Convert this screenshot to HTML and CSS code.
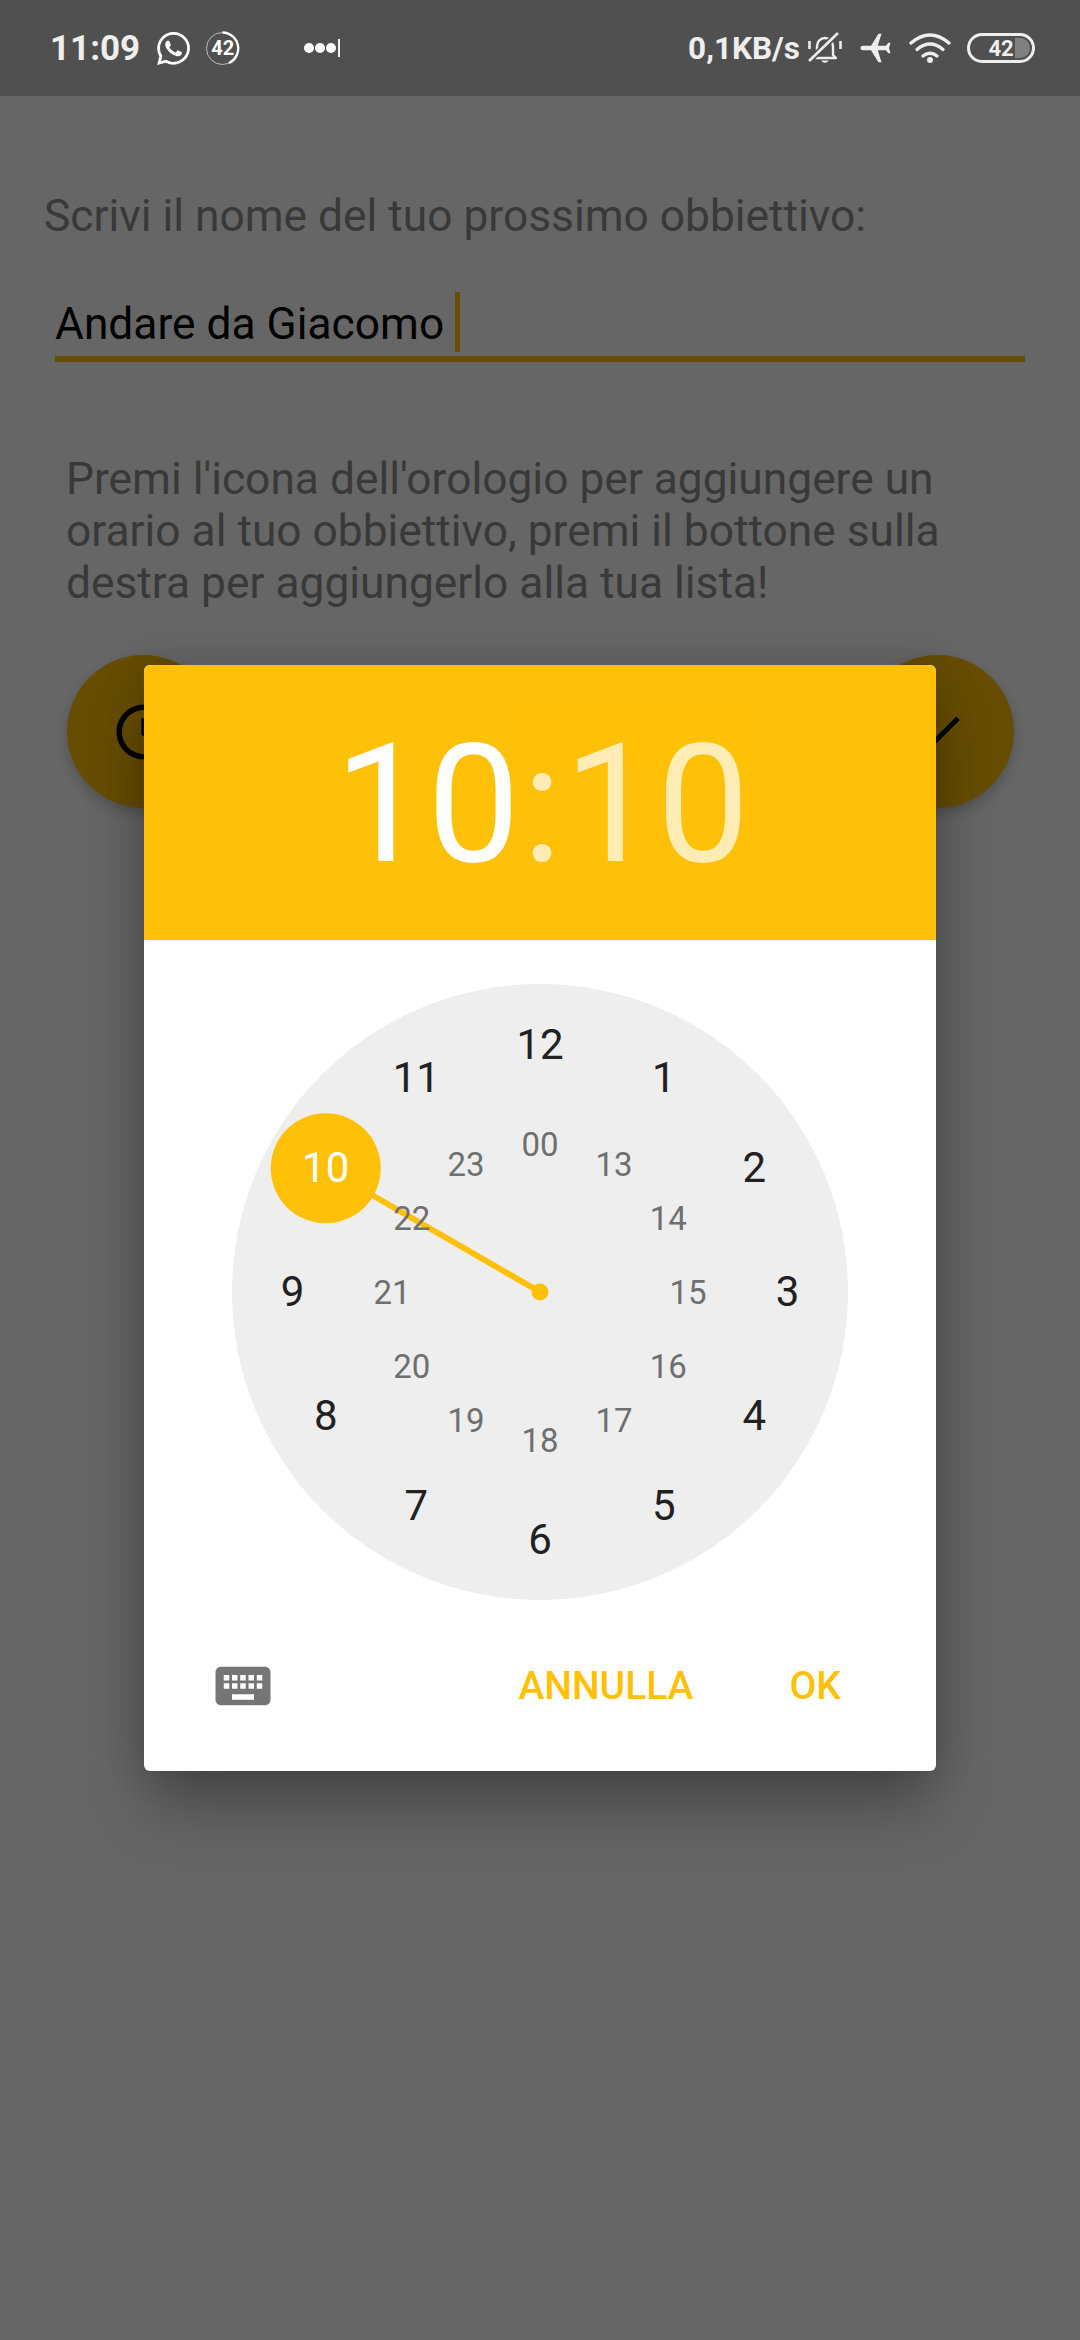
FILE: index.html
```html
<!DOCTYPE html>
<html lang="it">

<head>
  <meta charset="UTF-8" />
  <meta name="viewport" content="width=device-width, initial-scale=1" />
  <title>Nuovo obbiettivo</title>
  <link rel="stylesheet" href="styles.css">
</head>

<body>
  <div class="page">
    <div class="status-bar">
      <span class="status-time">11:09</span>
      <svg class="icon-whatsapp" viewBox="0 0 24 24">
        <path fill="#fff" d="M17.472 14.382c-.297-.149-1.758-.867-2.03-.967-.273-.099-.471-.148-.67.15-.197.297-.767.966-.94 1.164-.173.199-.347.223-.644.075-.297-.15-1.255-.463-2.39-1.475-.883-.788-1.48-1.761-1.653-2.059-.173-.297-.018-.458.13-.606.134-.133.298-.347.446-.52.149-.174.198-.298.298-.497.099-.198.05-.371-.025-.52-.075-.149-.669-1.612-.916-2.207-.242-.579-.487-.5-.669-.51-.173-.008-.371-.01-.57-.01-.198 0-.52.074-.792.372-.272.297-1.04 1.016-1.04 2.479 0 1.462 1.065 2.875 1.213 3.074.149.198 2.096 3.2 5.077 4.487.709.306 1.262.489 1.694.625.712.227 1.36.195 1.871.118.571-.085 1.758-.719 2.006-1.413.248-.694.248-1.289.173-1.413-.074-.124-.272-.198-.57-.347m-5.421 7.403h-.004a9.87 9.87 0 01-5.031-1.378l-.361-.214-3.741.982.998-3.648-.235-.374a9.86 9.86 0 01-1.51-5.26c.001-5.45 4.436-9.884 9.888-9.884 2.64 0 5.122 1.03 6.988 2.898a9.825 9.825 0 012.893 6.994c-.003 5.45-4.437 9.884-9.885 9.884m8.413-18.297A11.815 11.815 0 0012.05 0C5.495 0 .16 5.335.157 11.892c0 2.096.547 4.142 1.588 5.945L.057 24l6.305-1.654a11.882 11.882 0 005.683 1.448h.005c6.554 0 11.89-5.335 11.893-11.893a11.821 11.821 0 00-3.48-8.413z" />
      </svg>
      <div class="badge">
        <svg class="badge-ring" viewBox="0 0 35 35">
          <circle cx="17.5" cy="17.5" r="16" fill="none" stroke="#bbb" stroke-width="1" />
          <path d="M17.5 1.5A16 16 0 0 1 24 32" fill="none" stroke="#fff" stroke-width="2.4" />
        </svg>
        <span>42</span>
      </div>
      <svg class="icon-signal" viewBox="0 0 36 20">
        <circle cx="5" cy="10" r="5" fill="#fff" />
        <circle cx="16" cy="10" r="5" fill="#fff" />
        <circle cx="27" cy="10" r="5" fill="#fff" />
        <rect x="34" y="1" width="2" height="18" fill="#eee" />
      </svg>

      <span class="status-net">0,1KB/s</span>
      <svg class="icon-bell" viewBox="0 0 34 32">
        <path d="M9 23V14a8 8 0 0 1 16 0v9l3 3H6z" fill="none" stroke="#eee" stroke-width="2.4" stroke-linejoin="round" />
        <path d="M13.5 28.5a3.6 3 0 0 0 7 0z" fill="#eee" />
        <path d="M1.5 9v8M32.500 9v8" stroke="#eee" stroke-width="2.6" />
        <path d="M1 29L30 1" stroke="#505050" stroke-width="6" />
        <path d="M1 29L30 1" stroke="#eee" stroke-width="2.6" />
      </svg>
      <svg class="icon-plane" viewBox="2 2 19 20">
        <path fill="#eee" transform="rotate(-90 11.5 12)" d="M21 16v-2l-8-5V3.500c0-.83-.67-1.500-1.500-1.500S10 2.670 10 3.500V9l-8 5v2l8-2.500V19l-2 1.500V22l3.500-1 3.500 1v-1.500L13 19v-5.500l8 2.500z" />
      </svg>
      <svg class="icon-wifi" viewBox="0 0 42 30">
        <g fill="none" stroke="#eee" stroke-width="3.400" stroke-linecap="round">
          <path d="M2 10Q21 -6 40 10" />
          <path d="M8 16.500Q21 5.500 34 16.500" />
          <path d="M14 23Q21 17.500 28 23" />
        </g>
        <circle cx="21" cy="27" r="3" fill="#eee" />
      </svg>
      <div class="battery"><span>42</span></div>
    </div>

    <main class="content">
      <p class="goal-label">Scrivi il nome del tuo prossimo obbiettivo:</p>
      <div class="goal-input">
        <span class="goal-text">Andare da Giacomo</span>
        <span class="goal-caret"></span>
      </div>
      <p class="hint">Premi l'icona dell'orologio per aggiungere un orario al tuo obbiettivo, premi il bottone sulla destra per aggiungerlo alla tua lista!</p>
      <div class="actions">
        <button class="fab">
          <svg class="fab-clock" viewBox="0 0 24 24">
            <path d="M11.990 2C6.470 2 2 6.480 2 12s4.470 10 9.990 10C17.520 22 22 17.520 22 12S17.520 2 11.990 2zM12 20c-4.420 0-8-3.580-8-8s3.580-8 8-8 8 3.580 8 8-3.580 8-8 8zm.5-13H11v6l5.250 3.150.75-1.230-4.500-2.670z" />
          </svg>
        </button>
        <button class="fab">
          <svg class="fab-check" viewBox="0 0 24 24">
            <path d="M9 16.170L4.830 12l-1.420 1.410L9 19 21 7l-1.410-1.410z" />
          </svg>
        </button>
      </div>
    </main>

    <div class="scrim">
      <div class="dialog">
        <div class="dialog-header">
          <span class="time-hours">10</span><span class="time-colon">:</span><span class="time-minutes">10</span>
        </div>

        <div class="dialog-body">
          <div class="clock">
            <svg class="clock-hand" viewBox="0 0 616 616">
              <line x1="308" y1="308" x2="93.700" y2="184.250" stroke="#ffc107" stroke-width="6" />
              <circle cx="308" cy="308" r="8.500" fill="#ffc107" />
              <circle cx="93.700" cy="184.250" r="55" fill="#ffc107" />
            </svg>

            <span class="num n12">12</span>
            <span class="num n1">1</span>
            <span class="num n2">2</span>
            <span class="num n3">3</span>
            <span class="num n4">4</span>
            <span class="num n5">5</span>
            <span class="num n6">6</span>
            <span class="num n7">7</span>
            <span class="num n8">8</span>
            <span class="num n9">9</span>
            <span class="num n10 selected">10</span>
            <span class="num n11">11</span>

            <span class="num inner i0">00</span>
            <span class="num inner i13">13</span>
            <span class="num inner i14">14</span>
            <span class="num inner i15">15</span>
            <span class="num inner i16">16</span>
            <span class="num inner i17">17</span>
            <span class="num inner i18">18</span>
            <span class="num inner i19">19</span>
            <span class="num inner i20">20</span>
            <span class="num inner i21">21</span>
            <span class="num inner i22">22</span>
            <span class="num inner i23">23</span>
          </div>
        </div>

        <div class="dialog-footer">
          <svg class="icon-keyboard" viewBox="0 0 24 24">
            <path d="M20 5H4c-1.100 0-1.990.9-1.990 2L2 17c0 1.100.9 2 2 2h16c1.100 0 2-.9 2-2V7c0-1.100-.9-2-2-2zm-9 3h2v2h-2V8zm0 3h2v2h-2v-2zM8 8h2v2H8V8zm0 3h2v2H8v-2zm-1 2H5v-2h2v2zm0-3H5V8h2v2zm9 7H8v-2h8v2zm0-4h-2v-2h2v2zm0-3h-2V8h2v2zm3 3h-2v-2h2v2zm0-3h-2V8h2v2z" />
          </svg>
          <button class="text-btn cancel">ANNULLA</button>
          <button class="text-btn confirm">OK</button>
        </div>
      </div>
    </div>
  </div>
</body>

</html>
```

FILE: styles.css
```css
* {
  box-sizing: border-box;
  margin: 0;
  padding: 0;
}

body {
  background: #fff;
  color: #000;
  font-family: Roboto, 'Noto Sans', sans-serif;
}

button {
  border: none;
  background: none;
  font-family: inherit;
}

.page {
  position: relative;
  width: 1080px;
  height: 2340px;
  overflow: hidden;
}

/* status bar */
.status-bar {
  display: flex;
  align-items: center;
  height: 96px;
  padding: 0 45px 0 50px;
  background: #505050;
  color: #eee;
  font-weight: 700;
}

.status-time {
  font-size: 35px;
}

.icon-whatsapp {
  width: 33px;
  height: 33px;
  margin-left: 17px;
}

.badge {
  position: relative;
  display: flex;
  align-items: center;
  justify-content: center;
  width: 35px;
  height: 35px;
  margin-left: 15px;
  font-size: 20px;
  color: #fff;
}

.badge-ring {
  position: absolute;
  inset: 0;
}

.icon-signal {
  width: 36px;
  height: 20px;
  margin-left: 64px;
}

.status-net {
  margin-left: auto;
  font-size: 31.5px;
}

.icon-bell {
  width: 34px;
  height: 32px;
  margin-left: 8px;
}

.icon-plane {
  width: 35px;
  height: 30px;
  margin-left: 16px;
}

.icon-wifi {
  width: 42px;
  height: 30px;
  margin-left: 16px;
}

.battery {
  position: relative;
  display: flex;
  align-items: center;
  justify-content: center;
  width: 68px;
  height: 30px;
  margin-left: 16px;
  border: 3px solid #eee;
  border-radius: 15px;
  font-size: 22px;
}

.battery::before {
  content: '';
  position: absolute;
  top: 2px;
  right: 2px;
  bottom: 2px;
  width: 15px;
  background: #808080;
  border-radius: 0 10px 10px 0;
}

.battery span {
  position: relative;
}

/* page under the dialog */
.content {
  font-size: 44.3px;
  line-height: 52px;
}

.goal-label {
  margin: 94px 0 0 44px;
  color: #8f8f8f;
}

.goal-input {
  display: flex;
  height: 70px;
  margin: 50px 55px 0;
  border-bottom: 6px solid #ffc107;
}

.goal-text {
  padding-top: 6px;
}

.goal-caret {
  width: 5px;
  height: 60px;
  margin-left: 11px;
  background: #ffc107;
}

.hint {
  margin: 91px 55px 0 66px;
  color: #8f8f8f;
}

.actions {
  display: flex;
  justify-content: space-between;
  margin-top: 46px;
  padding: 0 66px 0 67px;
}

.fab {
  display: flex;
  align-items: center;
  justify-content: center;
  width: 153px;
  height: 153px;
  border-radius: 50%;
  background: #ffc107;
  box-shadow: 0 6px 14px rgba(0, 0, 0, 0.2);
}

.fab-clock {
  width: 66px;
  height: 66px;
}

.fab-check {
  width: 58px;
  height: 58px;
}

/* time picker dialog */
.scrim {
  position: absolute;
  top: 96px;
  left: 0;
  right: 0;
  bottom: 0;
  display: flex;
  align-items: center;
  justify-content: center;
  background: rgba(0, 0, 0, 0.6);
}

.dialog {
  width: 792px;
  height: 1106px;
  background: #fff;
  border-radius: 6px;
  overflow: hidden;
  box-shadow: 0 40px 60px -6px rgba(0, 0, 0, 0.3), 0 0 40px rgba(0, 0, 0, 0.15);
}

.dialog-header {
  display: flex;
  align-items: center;
  justify-content: center;
  height: 275px;
  padding: 4px 0 0 4px;
  background: #ffc107;
  color: #fff;
  font-size: 165px;
  line-height: 1;
}

.time-colon {
  margin: 0 2px;
  opacity: 0.7;
}

.time-minutes {
  opacity: 0.7;
}

.dialog-body {
  display: flex;
  justify-content: center;
  padding-top: 44px;
}

.clock {
  position: relative;
  width: 616px;
  height: 616px;
  border-radius: 50%;
  background: #eee;
}

.clock-hand {
  position: absolute;
  inset: 0;
}

.num {
  position: absolute;
  left: calc(308px + var(--x));
  top: calc(308px + var(--y));
  transform: translate(-50%, -50%);
  font-size: 42px;
  line-height: 1;
  color: #212121;
}

.num.inner {
  font-size: 33px;
  color: #6f6f6f;
}

.num.selected {
  color: #fff;
}

.n12 { --x: 0px; --y: -247.5px; }
.n1 { --x: 123.75px; --y: -214.3px; }
.n2 { --x: 214.3px; --y: -123.75px; }
.n3 { --x: 247.5px; --y: 0px; }
.n4 { --x: 214.3px; --y: 123.75px; }
.n5 { --x: 123.75px; --y: 214.3px; }
.n6 { --x: 0px; --y: 247.5px; }
.n7 { --x: -123.75px; --y: 214.3px; }
.n8 { --x: -214.3px; --y: 123.75px; }
.n9 { --x: -247.5px; --y: 0px; }
.n10 { --x: -214.3px; --y: -123.75px; }
.n11 { --x: -123.75px; --y: -214.3px; }

.i0 { --x: 0px; --y: -148px; }
.i13 { --x: 74px; --y: -128.2px; }
.i14 { --x: 128.2px; --y: -74px; }
.i15 { --x: 148px; --y: 0px; }
.i16 { --x: 128.2px; --y: 74px; }
.i17 { --x: 74px; --y: 128.2px; }
.i18 { --x: 0px; --y: 148px; }
.i19 { --x: -74px; --y: 128.2px; }
.i20 { --x: -128.2px; --y: 74px; }
.i21 { --x: -148px; --y: 0px; }
.i22 { --x: -128.2px; --y: -74px; }
.i23 { --x: -74px; --y: -128.2px; }

.dialog-footer {
  display: flex;
  align-items: center;
  height: 171px;
  padding: 0 95px 0 66px;
}

.icon-keyboard {
  width: 66px;
  height: 66px;
  fill: #757575;
}

.text-btn {
  color: #ffc107;
  font-size: 39px;
  font-weight: 500;
  cursor: pointer;
}

.cancel {
  margin-left: auto;
}

.confirm {
  margin-left: 96px;
}
```
